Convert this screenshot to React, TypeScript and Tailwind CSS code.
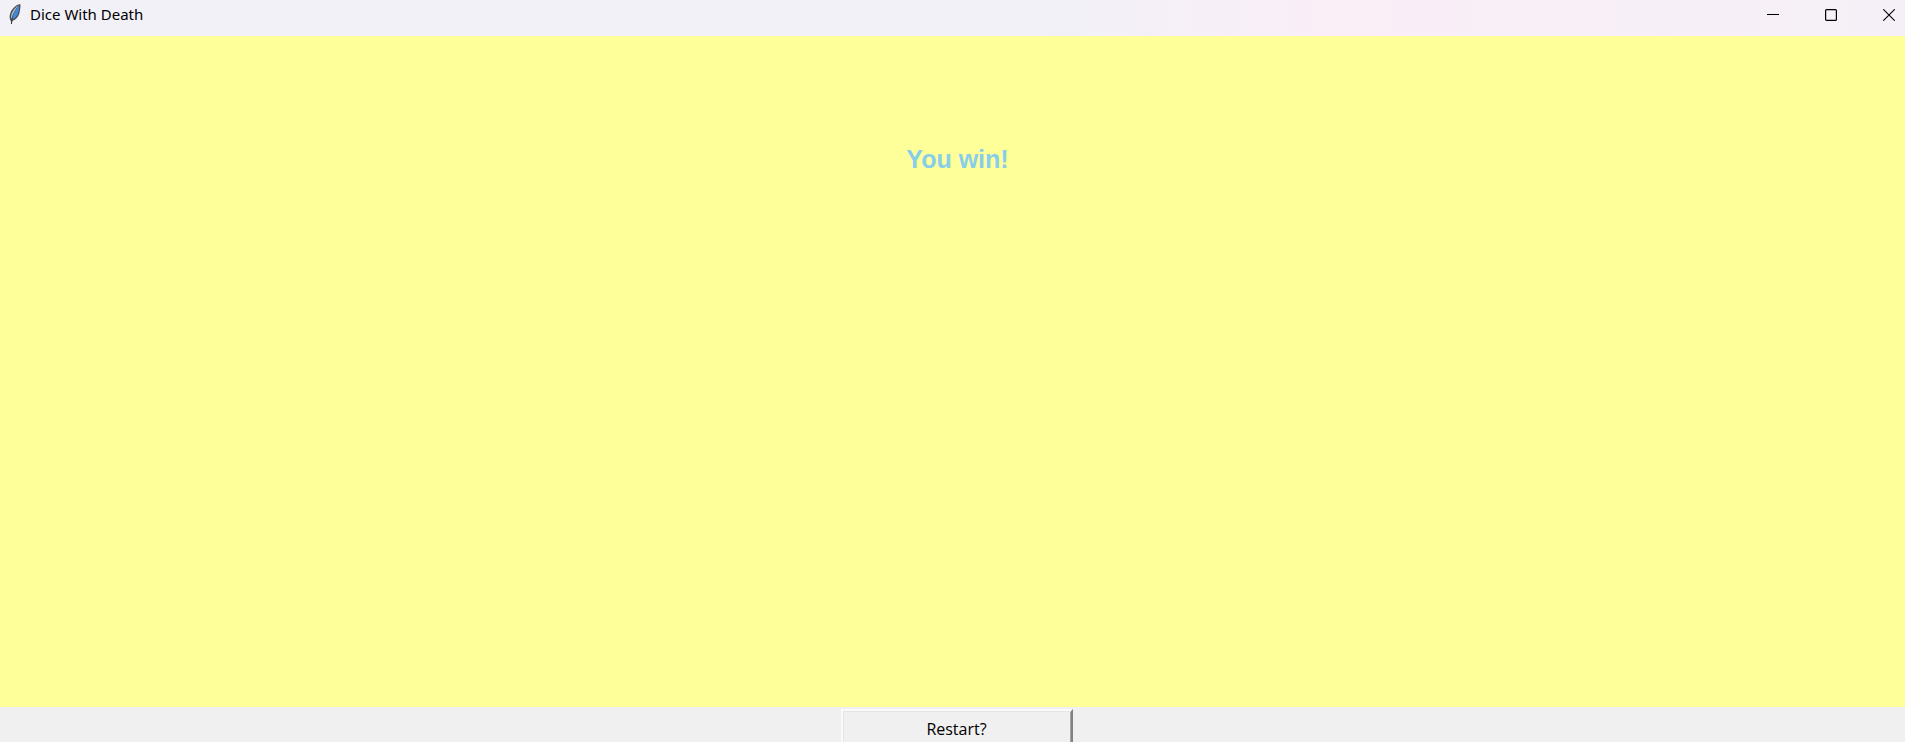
import React from "react";

function FeatherIcon() {
  return (
    <svg width="14" height="22" viewBox="0 0 14 22" aria-hidden="true">
      <path d="M12.200 1C8 1.600 3.200 6 1.900 11.500c-.6 2.500-.2 4.700.8 6.300l.7 2.900.9-2.900c4.200-1 6.600-4.800 7.300-8.500C12 6.500 13 3.500 12.200 1Z" fill="#4a4d54" />
      <path d="M10.800 2.300C7.300 4 3.900 8.500 3 13c-.2 1.200 0 2.200.3 3C4.500 11.500 6.800 7 10.800 2.300Z" fill="#a9bdd2" />
      <path d="M11.200 2.500C7.300 6.800 5 11.300 4.200 16.500c3.500-1.200 5.600-4.300 6.200-7.500.4-2.300 1.300-4.300.8-6.500Z" fill="#3f8ade" />
      <path d="M4.300 15.500C4 17.500 3.700 19 3.400 21" fill="none" stroke="#333" strokeWidth="1" />
    </svg>
  );
}

function WindowButton({ label, children }: { label: string; children: React.ReactNode }) {
  return (
    <button type="button" aria-label={label} className="flex h-[30px] w-[30px] items-center justify-center">
      <svg width="12" height="12" viewBox="0 0 12 12" fill="none" stroke="#000" aria-hidden="true">
        {children}
      </svg>
    </button>
  );
}

export default function App() {
  return (
    <div className="flex h-screen flex-col overflow-hidden bg-[#f0f0f0] text-black">
      <header className="flex h-9 shrink-0 items-start justify-between bg-linear-to-r from-[#f2f1f8] from-55% via-[#faeef7] via-70% to-[#f5f0f7] pr-px pl-2">
        <div className="flex h-7 items-center gap-2 font-['Noto_Sans',sans-serif] text-[15px] leading-5">
          <FeatherIcon />
          <h1>Dice With Death</h1>
        </div>
        <div className="flex gap-7">
          <WindowButton label="Minimize">
            <path d="M0 5.500H12" />
          </WindowButton>
          <WindowButton label="Maximize">
            <rect x=".6" y=".6" width="10.800" height="10.800" rx="1" strokeWidth="1.200" />
          </WindowButton>
          <WindowButton label="Close">
            <path d="M.3.3 11.700 11.700M11.700.3.3 11.700" strokeWidth="1.100" />
          </WindowButton>
        </div>
      </header>
      <main className="min-h-0 flex-1 bg-[#ffff99] pt-[107px] pl-[10px] text-center">
        <p className="font-['Liberation_Sans',sans-serif] text-[25px] leading-8 font-bold text-[#87ceeb]">You win!</p>
      </main>
      <footer className="flex h-[35px] shrink-0 justify-center overflow-hidden pt-[2px] pl-2">
        <button
          type="button"
          className="h-[39px] w-[232px] border-2 border-t-[#fafafa] border-r-[#808080] border-b-[#808080] border-l-[#fafafa] bg-[#f0f0f0] font-['Open_Sans',sans-serif] text-[16px] leading-5 shadow-[inset_1px_1px_0_#e5e5e5,inset_-1px_-1px_0_#a6a6a6]"
        >
          Restart?
        </button>
      </footer>
    </div>
  );
}
